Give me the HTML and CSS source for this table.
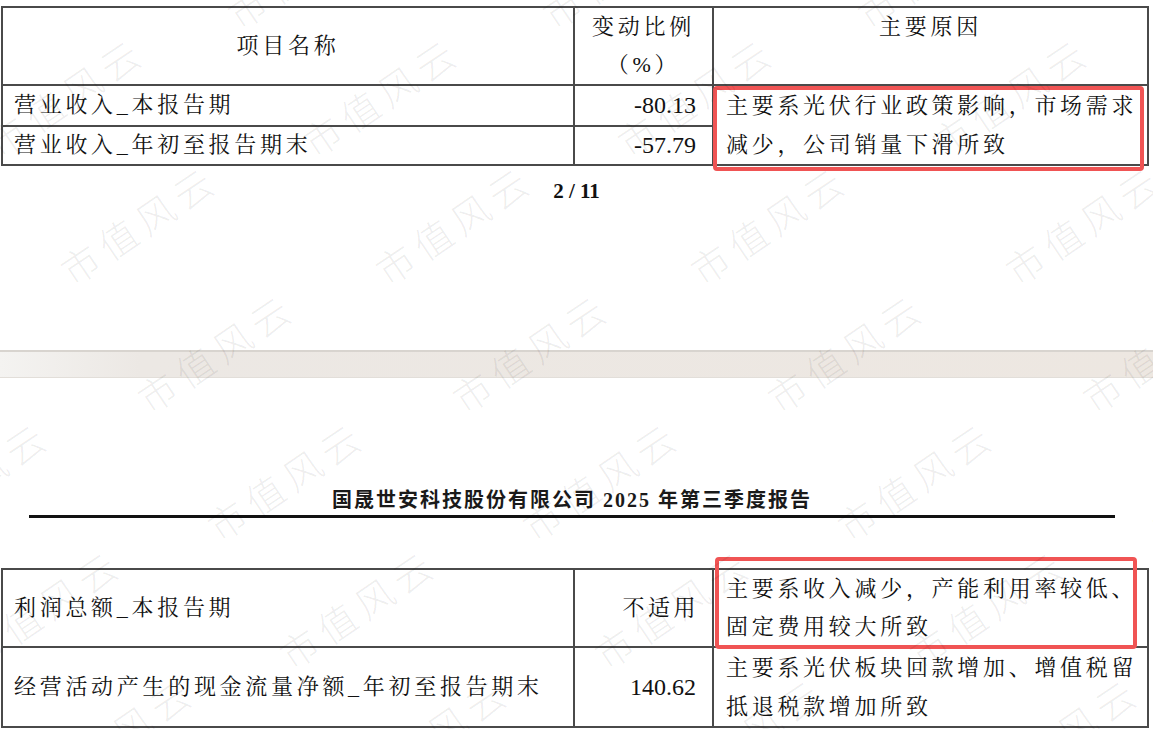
FILE: index.html
```html
<!DOCTYPE html>
<html lang="zh-CN">
<head>
    <meta charset="UTF-8">
    <meta name="viewport" content="width=device-width, initial-scale=1.0">
    <title>国晟世安科技股份有限公司 2025 年第三季度报告</title>
    <link rel="stylesheet" href="styles.css">
</head>
<body>
    <div class="page page-one">
        <table class="report">
            <colgroup>
                <col class="c-name">
                <col class="c-ratio">
                <col class="c-reason">
            </colgroup>
            <tr class="head">
                <td class="center">项目名称</td>
                <td class="center">变动比例<br>（%）</td>
                <td class="center top">主要原因</td>
            </tr>
            <tr class="row-a">
                <td class="name">营业收入_本报告期</td>
                <td class="num">-80.13</td>
                <td class="reason" rowspan="2">主要系光伏行业政策影响，市场需求减少，公司销量下滑所致</td>
            </tr>
            <tr class="row-b">
                <td class="name">营业收入_年初至报告期末</td>
                <td class="num">-57.79</td>
            </tr>
        </table>
        <div class="page-num">2 / 11</div>
        <div class="mark mark-one"></div>
    </div>

    <div class="page-gap"></div>

    <div class="page page-two">
        <div class="doc-title">国晟世安科技股份有限公司 2025 年第三季度报告</div>
        <table class="report report-two">
            <colgroup>
                <col class="c-name">
                <col class="c-ratio">
                <col class="c-reason">
            </colgroup>
            <tr class="row-tall">
                <td class="name">利润总额_本报告期</td>
                <td class="num cjk">不适用</td>
                <td class="reason">主要系收入减少，产能利用率较低、固定费用较大所致</td>
            </tr>
            <tr class="row-tall2">
                <td class="name">经营活动产生的现金流量净额_年初至报告期末</td>
                <td class="num">140.62</td>
                <td class="reason">主要系光伏板块回款增加、增值税留抵退税款增加所致</td>
            </tr>
        </table>
        <div class="mark mark-two"></div>
    </div>

    <div class="watermarks" aria-hidden="true">
        <div class="wm-grid">
            <div class="wm-row"><span>市值风云</span><span>市值风云</span><span>市值风云</span><span>市值风云</span><span>市值风云</span></div>
            <div class="wm-row"><span>市值风云</span><span>市值风云</span><span>市值风云</span><span>市值风云</span><span>市值风云</span></div>
            <div class="wm-row"><span>市值风云</span><span>市值风云</span><span>市值风云</span><span>市值风云</span><span>市值风云</span></div>
            <div class="wm-row"><span>市值风云</span><span>市值风云</span><span>市值风云</span><span>市值风云</span><span>市值风云</span></div>
            <div class="wm-row"><span>市值风云</span><span>市值风云</span><span>市值风云</span><span>市值风云</span><span>市值风云</span></div>
            <div class="wm-row"><span>市值风云</span><span>市值风云</span><span>市值风云</span><span>市值风云</span><span>市值风云</span></div>
            <div class="wm-row"><span>市值风云</span><span>市值风云</span><span>市值风云</span><span>市值风云</span><span>市值风云</span></div>
        </div>
    </div>
</body>
</html>
```

FILE: styles.css
```css
html, body { margin: 0; height: 729px; overflow: hidden; }
body { position: relative; background: #fff; color: #111; font-family: "Liberation Serif", "Noto Serif CJK SC", "Noto Sans CJK SC", serif; }

.page { position: relative; background: #fff; }
.page-one { height: 350px; padding-top: 6px; box-sizing: border-box; }
.page-two { height: 351px; }
.page-gap { height: 28px; box-sizing: border-box; border-top: 2px solid #d8d4cf; border-bottom: 1px solid #e2ded9; background: linear-gradient(to right, #f4f3f1 0, #ece8e4 140px, #ede7e1 100%); }

.report { width: 1146px; margin-left: 1px; border-collapse: collapse; table-layout: fixed; font-size: 22px; letter-spacing: 3.7px; }
.report td { border: 2px solid #4a4a4a; padding: 0; line-height: 34px; vertical-align: middle; }
.c-name { width: 572px; }
.c-ratio { width: 139px; }
.c-reason { width: 435px; }

.head { height: 78px; }
.head td { line-height: 38px; }
.row-a { height: 39px; }
.row-b { height: 38px; }
.row-tall { height: 76px; }
.row-tall2 { height: 78px; }

.center { text-align: center; }
.top { vertical-align: top !important; }
.name { padding-left: 11px !important; white-space: nowrap; }
.num { text-align: right; padding-right: 16px !important; font-size: 24px; letter-spacing: 0; }
.num.cjk { font-size: 22px; letter-spacing: 3.5px; padding-right: 13px !important; }
.reason { padding-left: 12px !important; padding-right: 4px !important; line-height: 39px !important; }
.row-tall .reason { line-height: 38px !important; }

.page-num { margin-top: 13px; text-align: center; font-weight: bold; font-size: 21px; line-height: 24px; color: #111; }

.doc-title { margin: 0 38px 50px 29px; padding-top: 110px; padding-bottom: 3px; border-bottom: 3px solid #111; text-align: center; font-family: "Liberation Serif", "Noto Sans CJK SC", sans-serif; font-weight: bold; font-size: 20px; letter-spacing: 2px; line-height: 24px; color: #1a1a1a; }

.mark { position: absolute; box-sizing: border-box; border: 4px solid #f05454; border-radius: 4px; }
.mark-one { top: 86px; left: 713px; width: 431px; height: 85px; }
.mark-two { top: 179px; left: 715px; width: 422px; height: 92px; }

.watermarks { position: absolute; top: 0; left: 0; right: 0; bottom: 0; overflow: hidden; pointer-events: none; z-index: 5; }
.wm-grid { margin-top: -97px; }
.wm-row { display: flex; align-items: center; height: 128px; }
.wm-row span { flex: none; width: 315px; text-align: center; white-space: nowrap; transform: rotate(-34deg); font-family: "Noto Sans CJK SC", sans-serif; font-weight: 300; font-size: 38px; letter-spacing: 7px; color: rgba(0, 0, 0, 0.07); }
.wm-row:nth-child(1) { margin-left: -167px; }
.wm-row:nth-child(2) { margin-left: -92px; }
.wm-row:nth-child(3) { margin-left: -19px; }
.wm-row:nth-child(4) { margin-left: 58px; }
.wm-row:nth-child(5) { margin-left: -187px; }
.wm-row:nth-child(6) { margin-left: -115px; }
.wm-row:nth-child(7) { margin-left: -42px; }
```
